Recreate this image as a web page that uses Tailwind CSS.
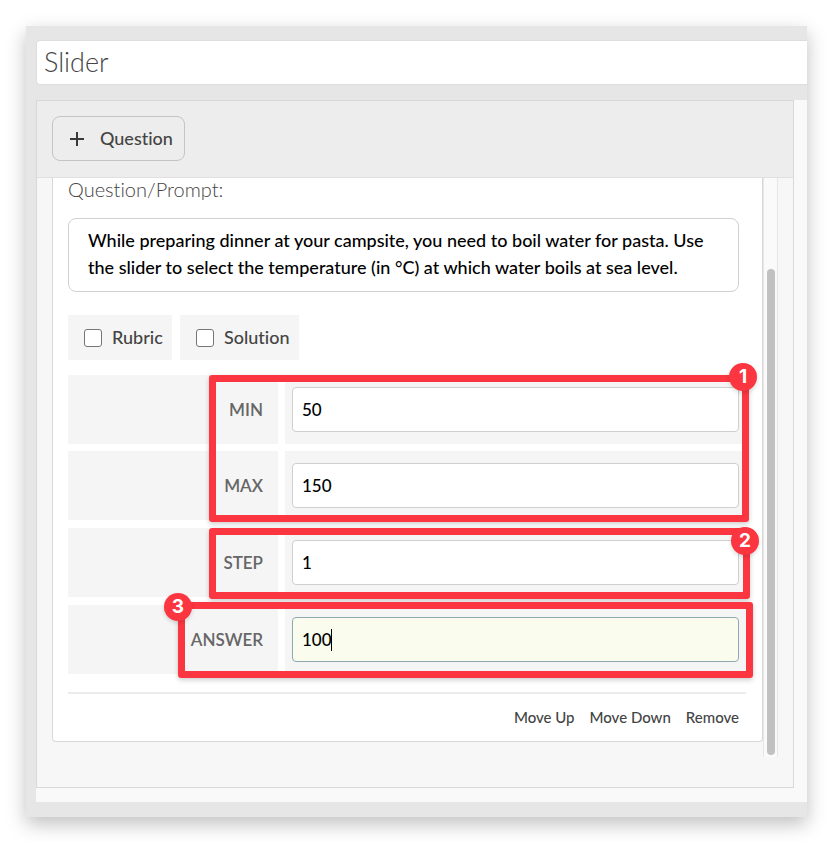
<!DOCTYPE html>
<html lang="en">
<head>
    <meta charset="UTF-8">
    <meta name="viewport" content="width=device-width, initial-scale=1.0">
    <title>Slider</title>
    <script src="https://cdn.jsdelivr.net/npm/@tailwindcss/browser@4"></script>
</head>
<body class="bg-white p-[26px] font-['Lato','Open_Sans',sans-serif] text-[#444] [font-variant-ligatures:none]">
    <form class="bg-[#e6e6e6] pt-[14px] pb-[15px] pl-[10px] shadow-[0_7px_18px_rgba(0,0,0,0.25)]">
        <input type="text" aria-label="Title" value="Slider" class="block w-full h-[45px] px-[7px] pb-[3px] bg-white rounded-l border-y border-l border-[#dedede] text-[27px] font-light text-[#444] outline-none">

        <div class="mt-[15px] bg-[#f9f9f9] pr-[13px] pb-[14px]">
            <div class="border border-[#d8d8d8] bg-[#f7f7f7]">
                <!-- Toolbar -->
                <div class="bg-[#ededed] border-b border-[#e0e0e0] px-[15px] pt-[15px] pb-4">
                    <button type="button" class="flex items-center h-[45px] w-[133px] pl-[17px] gap-4 rounded-lg border border-[#c4c4c4] text-[18px] font-medium text-[#444]">
                        <svg class="w-[14px] h-[14px] shrink-0" viewBox="0 0 14 14" fill="none" stroke="#3a3a3a" stroke-width="2"><path d="M7 0v14M0 7h14"/></svg>
                        Question
                    </button>
                </div>

                <div class="flex pl-[15px] pr-[15px] pb-[30px]">
                    <!-- Question card -->
                    <div class="grow min-w-0 bg-white border-x border-b border-[#d8d8d8] rounded-b pl-[15px] pr-4 mb-[15px]">
                        <label for="prompt" class="block text-[20px] leading-[22px] font-light">Question/Prompt:</label>
                        <textarea id="prompt" rows="2" class="block mt-[18px] w-[calc(100%-7px)] h-[74px] rounded-lg border border-[#d0d0d0] px-[19px] py-[8px] text-[18px] leading-[27px] font-medium text-black resize-none overflow-hidden outline-none">While preparing dinner at your campsite, you need to boil water for pasta. Use the slider to select the temperature (in °C) at which water boils at sea level.</textarea>

                        <div class="flex gap-2 mt-[23px] text-[18px] font-medium">
                            <label class="flex items-center gap-[10px] w-[104px] h-[45px] pl-4 bg-[#f5f5f5]">
                                <input type="checkbox" class="appearance-none size-[18px] bg-white border border-[#767676] rounded-[3px]">
                                Rubric
                            </label>
                            <label class="flex items-center gap-[10px] w-[119px] h-[45px] pl-4 bg-[#f5f5f5]">
                                <input type="checkbox" class="appearance-none size-[18px] bg-white border border-[#767676] rounded-[3px]">
                                Solution
                            </label>
                        </div>

                        <!-- Slider settings -->
                        <div class="mt-[15px] flex flex-col gap-2 text-[17px]">
                            <div class="relative flex flex-col gap-[7px]">
                                <div class="flex gap-[7px] h-[69px]">
                                    <label for="min" class="w-[210px] shrink-0 bg-[#f5f5f5] flex items-center justify-end pr-[15px] font-semibold text-[#666]">MIN</label>
                                    <div class="grow bg-[#f5f5f5] flex items-center px-[7px]">
                                        <input id="min" type="text" value="50" class="w-full h-[45px] bg-white rounded border border-[#cfcfcf] px-[9px] font-medium text-black outline-none">
                                    </div>
                                </div>
                                <div class="flex gap-[7px] h-[69px]">
                                    <label for="max" class="w-[210px] shrink-0 bg-[#f5f5f5] flex items-center justify-end pr-[15px] font-semibold text-[#666]">MAX</label>
                                    <div class="grow bg-[#f5f5f5] flex items-center px-[7px]">
                                        <input id="max" type="text" value="150" class="w-full h-[45px] bg-white rounded border border-[#cfcfcf] px-[9px] font-medium text-black outline-none">
                                    </div>
                                </div>
                                <div class="absolute left-[141px] -right-[3px] top-0 -bottom-[2px] border-[7px] border-[#fb3640] rounded-[3px] shadow-[0_2px_5px_rgba(0,0,0,0.2)] pointer-events-none"></div>
                                <span class="absolute -right-[11px] -top-[12px] size-7 rounded-full bg-[#fb3640] text-white font-['Inter'] font-bold text-[19px] flex items-center justify-center shadow-[0_2px_4px_rgba(0,0,0,0.15)]">1</span>
                            </div>

                            <div class="relative flex gap-[7px] h-[69px]">
                                <label for="step" class="w-[210px] shrink-0 bg-[#f5f5f5] flex items-center justify-end pr-[15px] font-semibold text-[#666]">STEP</label>
                                <div class="grow bg-[#f5f5f5] flex items-center px-[7px]">
                                    <input id="step" type="text" value="1" class="w-full h-[45px] bg-white rounded border border-[#cfcfcf] px-[9px] font-medium text-black outline-none">
                                </div>
                                <div class="absolute left-[141px] -right-[4px] top-0 -bottom-[2px] border-[7px] border-[#fb3640] rounded-[3px] shadow-[0_2px_5px_rgba(0,0,0,0.2)] pointer-events-none"></div>
                                <span class="absolute -right-[13px] -top-[1px] size-7 rounded-full bg-[#fb3640] text-white font-['Inter'] font-bold text-[19px] flex items-center justify-center shadow-[0_2px_4px_rgba(0,0,0,0.15)]">2</span>
                            </div>

                            <div class="relative flex gap-[7px] h-[69px]">
                                <label for="answer" class="w-[210px] shrink-0 bg-[#f5f5f5] flex items-center justify-end pr-[15px] font-semibold text-[#666]">ANSWER</label>
                                <div class="relative grow bg-[#f5f5f5] flex items-center px-[7px]">
                                    <input id="answer" type="text" value="100" class="w-full h-[45px] bg-[#fafdee] rounded border border-[#8fa9b0] px-[9px] font-medium text-black outline-none">
                                    <span class="absolute left-[46px] top-[24px] w-px h-[22px] bg-black"></span>
                                </div>
                                <div class="absolute left-[110px] -right-[7px] -top-[3px] -bottom-[4px] border-[7px] border-[#fb3640] rounded-[3px] shadow-[0_2px_5px_rgba(0,0,0,0.2)] pointer-events-none"></div>
                                <span class="absolute left-[96px] -top-[12px] size-7 rounded-full bg-[#fb3640] text-white font-['Inter'] font-bold text-[19px] flex items-center justify-center shadow-[0_2px_4px_rgba(0,0,0,0.15)]">3</span>
                            </div>
                        </div>

                        <div class="mt-[18px] border-t-2 border-[#ebebeb] flex justify-end gap-[15px] pr-[7px] pt-3 pb-[13px] text-[15px] leading-[22px] font-medium">
                            <button type="button">Move Up</button>
                            <button type="button">Move Down</button>
                            <button type="button">Remove</button>
                        </div>
                    </div>

                    <!-- Scrollbar -->
                    <div class="w-[15px] shrink-0 bg-[#fafafa] border-x border-[#e6e6e6] flex flex-col px-[3px] pb-[2px]">
                        <div class="mt-[91px] w-2 grow rounded-full bg-[#c1c1c1]"></div>
                    </div>
                </div>
            </div>
        </div>
    </form>
</body>
</html>
